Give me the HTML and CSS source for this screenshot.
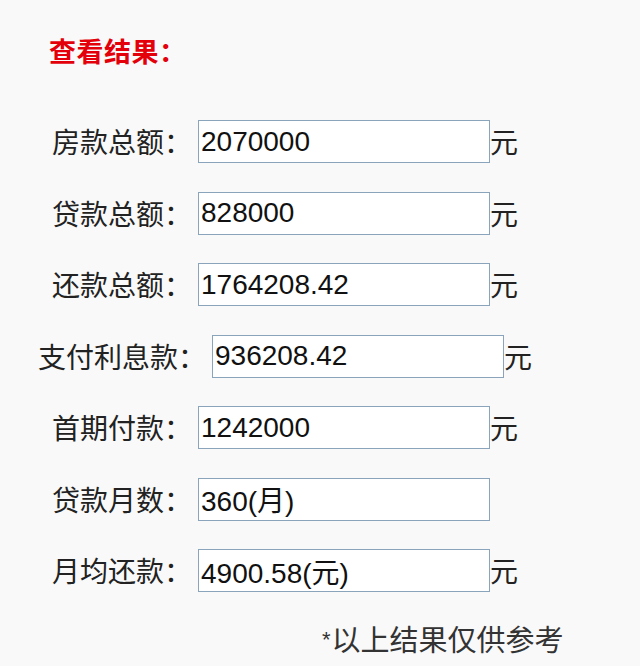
FILE: index.html
```html
<!DOCTYPE html>
<html lang="zh">
<head>
<meta charset="utf-8">
<link rel="stylesheet" href="styles.css">
</head>
<body>
<div class="page">
  <h2 class="title">查看结果：</h2>
  <div class="rows">
    <div class="row"><span class="label">房款总额：</span><input class="field" readonly value="2070000"><span class="unit">元</span></div>
    <div class="row"><span class="label">贷款总额：</span><input class="field" readonly value="828000"><span class="unit">元</span></div>
    <div class="row"><span class="label">还款总额：</span><input class="field" readonly value="1764208.42"><span class="unit">元</span></div>
    <div class="row"><span class="label">支付利息款：</span><input class="field" readonly value="936208.42"><span class="unit">元</span></div>
    <div class="row"><span class="label">首期付款：</span><input class="field" readonly value="1242000"><span class="unit">元</span></div>
    <div class="row"><span class="label">贷款月数：</span><input class="field" readonly value="360(月)"><span class="unit hidden">元</span></div>
    <div class="row"><span class="label">月均还款：</span><input class="field" readonly value="4900.58(元)"><span class="unit">元</span></div>
  </div>
  <p class="note"><span class="star">*</span>以上结果仅供参考</p>
</div>
</body>
</html>
```

FILE: styles.css
```css
html, body {
  margin: 0;
  padding: 0;
  background: #f9f9f9;
}
body {
  font-family: "Liberation Sans", "Noto Sans CJK SC", sans-serif;
  color: #222;
}
.page {
  width: 640px;
  height: 666px;
  overflow: hidden;
}
.title {
  margin: 0;
  padding: 33px 0 0 49px;
  font-family: "Noto Sans CJK SC", sans-serif;
  font-size: 27px;
  font-weight: 700;
  line-height: 36px;
  letter-spacing: 0.5px;
  color: #e3000b;
}
.rows {
  width: 570px;
  margin-top: 51px;
  display: flex;
  flex-direction: column;
  gap: 28.5px;
}
.row {
  display: flex;
  align-items: center;
  justify-content: center;
  height: 43px;
}
.label {
  font-family: "Noto Sans CJK SC", sans-serif;
  font-size: 28px;
  line-height: 43px;
  margin-right: 6px;
  color: #222;
}
.field {
  box-sizing: border-box;
  width: 292px;
  height: 43px;
  margin: 0;
  padding: 0 2px;
  border: 1.5px solid #8aa5bb;
  background: #fff;
  font-family: "Liberation Sans", "Noto Sans CJK SC", sans-serif;
  font-size: 28px;
  color: #111;
  outline: none;
}
.unit {
  font-family: "Noto Sans CJK SC", sans-serif;
  font-size: 28px;
  line-height: 43px;
  color: #222;
}
.hidden {
  visibility: hidden;
}
.note {
  margin: 27px 0 0 322px;
  font-family: "Noto Sans CJK SC", sans-serif;
  font-size: 29px;
  line-height: 38px;
  color: #333;
}
.star {
  font-family: "Liberation Sans", sans-serif;
  font-size: 22px;
  vertical-align: 4px;
  margin-right: 1px;
}
```
